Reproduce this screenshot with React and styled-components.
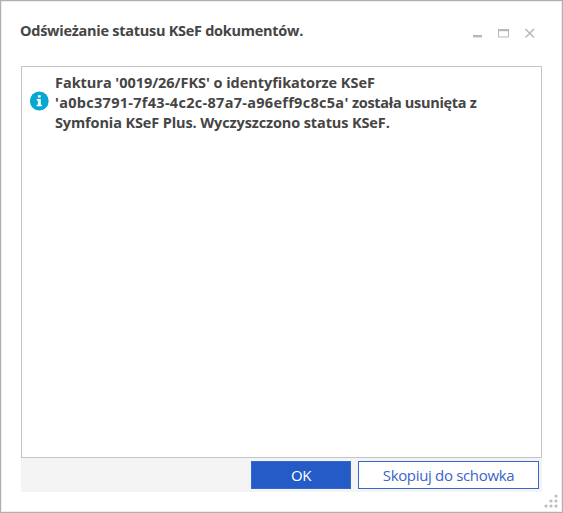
import React from "react";
import styled, { createGlobalStyle, css } from "styled-components";

export default function App() {
  return (
    <>
      <GlobalStyle />
      <Window>
        <TitleBar>
          <Title>Odświeżanie statusu KSeF dokumentów.</Title>
          <WindowControls />
        </TitleBar>
        <Messages>
          <Message>
            <InfoIcon />
            <MessageText>
              <Line spacing={-0.04}>Faktura '0019/26/FKS' o identyfikatorze KSeF</Line>
              <Line spacing={-0.3}>
                <DocumentId>'a0bc3791-7f43-4c2c-87a7-a96eff9c8c5a'</DocumentId> została usunięta z
              </Line>
              <Line spacing={-0.12}>Symfonia KSeF Plus. Wyczyszczono status KSeF.</Line>
            </MessageText>
          </Message>
        </Messages>
        <Footer>
          <Button primary width={100}>
            OK
          </Button>
          <Button width={181}>Skopiuj do schowka</Button>
        </Footer>
        <ResizeGrip />
      </Window>
    </>
  );
}

function WindowControls() {
  return (
    <Controls width="66" height="14" viewBox="0 0 66 14">
      <rect x="3" y="9" width="9" height="2.4" fill="#b8b8b8" />
      <path d="M28 3h11v2.2h-11z" fill="#b8b8b8" />
      <path d="M28.5 3.5h10v7.5h-10z" fill="none" stroke="#b8b8b8" />
      <path d="M55.5 3l8.5 8.5M64 3l-8.5 8.5" stroke="#b8b8b8" strokeWidth="1.5" />
    </Controls>
  );
}

function InfoIcon() {
  return (
    <Info width="20" height="20" viewBox="0 0 20 20">
      <circle cx="10.3" cy="10" r="9.4" fill="#06a7d3" />
      <rect x="8.9" y="4.2" width="2.8" height="2.4" fill="#ffffff" />
      <path d="M7.8 8h4v5.7h1.2v1.6H7.6v-1.6h1.3V9.4H7.8z" fill="#ffffff" />
    </Info>
  );
}

function ResizeGrip() {
  return (
    <Grip width="16" height="16" viewBox="0 0 16 16" fill="#bdbdbd">
      <circle cx="13" cy="3" r="1.6" />
      <circle cx="8" cy="8" r="1.6" />
      <circle cx="13" cy="8" r="1.6" />
      <circle cx="3" cy="13" r="1.6" />
      <circle cx="8" cy="13" r="1.6" />
      <circle cx="13" cy="13" r="1.6" />
    </Grip>
  );
}

const GlobalStyle = createGlobalStyle`
  * {
    box-sizing: border-box;
  }

  body {
    margin: 0;
    background: #ffffff;
    font-family: "Open Sans", "Noto Sans", sans-serif;
    color: #454545;
  }
`;

const Window = styled.div`
  display: flex;
  flex-direction: column;
  width: 563px;
  height: 513px;
  padding: 0 20px 0 20px;
  border: 1px solid #b0b0b0;
  box-shadow: inset 0 0 0 1px #ededed;
  background: #ffffff;
`;

const TitleBar = styled.header`
  display: flex;
  justify-content: space-between;
  height: 65px;
  padding-top: 20px;
`;

const Title = styled.h1`
  margin: 0 0 0 -1px;
  font-size: 14.5px;
  font-weight: 700;
  line-height: 20px;
  letter-spacing: -0.27px;
  white-space: nowrap;
`;

const Controls = styled.svg`
  margin-top: 5px;
  margin-right: 6px;
`;

const Messages = styled.main`
  width: 521px;
  height: 392px;
  padding: 6px 7px;
  border: 1px solid #c4c4c4;
`;

const Message = styled.div`
  display: flex;
  align-items: center;
`;

const Info = styled.svg`
  flex: none;
  margin-right: 6px;
  margin-bottom: 4px;
`;

const MessageText = styled.p`
  margin: 0;
  font-size: 14.5px;
  font-weight: 700;
  line-height: 20px;
`;

const Line = styled.span`
  display: block;
  white-space: nowrap;
  letter-spacing: ${props => props.spacing + "px"};
`;

const DocumentId = styled.span`
  letter-spacing: 0.29px;
`;

const Footer = styled.footer`
  display: flex;
  justify-content: flex-end;
  gap: 7px;
  width: 521px;
  height: 34px;
  padding: 3px 3px 3px;
  background: #f4f4f4;
`;

const Button = styled.button`
  width: ${props => props.width + "px"};
  height: 28px;
  padding: 0;
  border: 1px solid #3468cf;
  background: #ffffff;
  color: #3a66c9;
  font-family: inherit;
  font-size: 15px;
  line-height: 26px;
  letter-spacing: -0.33px;

  ${props =>
    props.primary &&
    css`
      background: #245bc7;
      color: #ffffff;
    `}
`;

const Grip = styled.svg`
  flex: none;
  align-self: flex-end;
  margin: 1px -17px 0 0;
`;
